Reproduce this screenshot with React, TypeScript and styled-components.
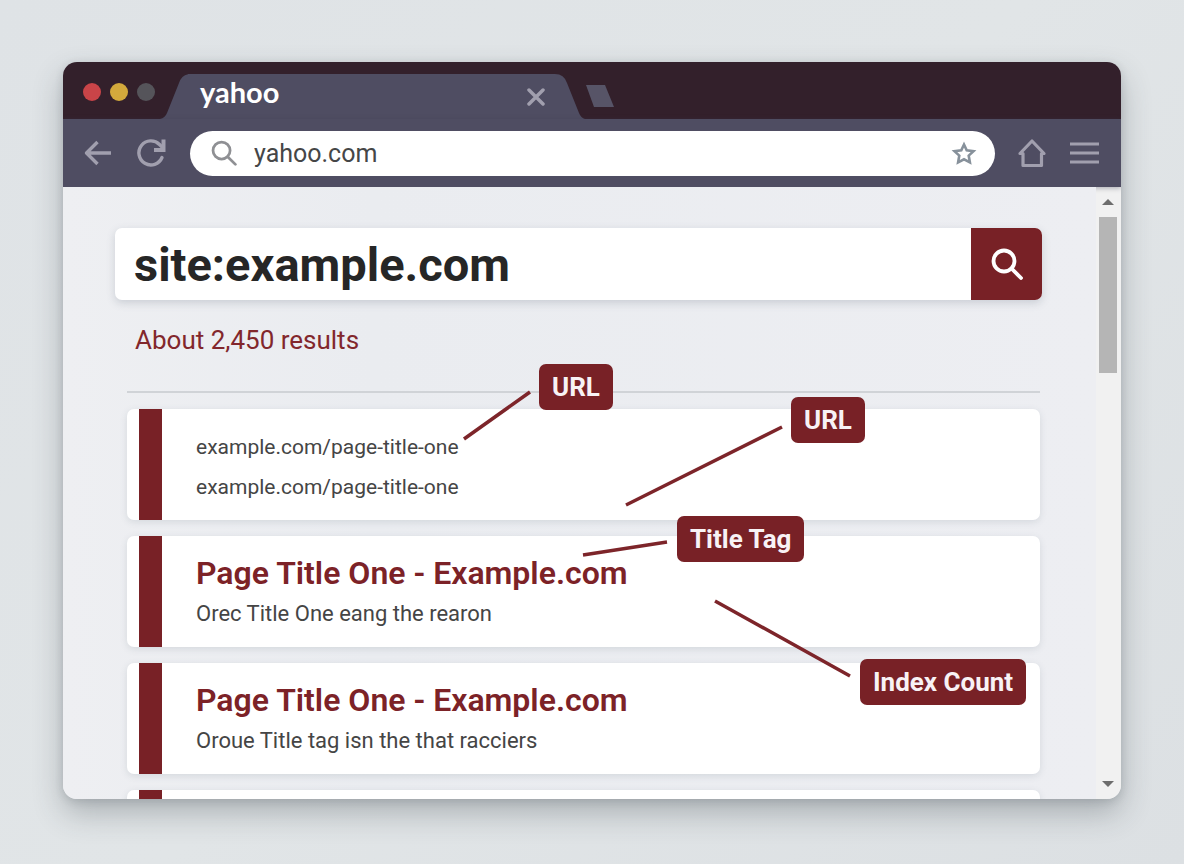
import React from 'react';
import styled, { createGlobalStyle } from 'styled-components';

const GlobalStyle = createGlobalStyle`
  * { box-sizing: border-box; }
  body {
    margin: 0;
    font-family: Roboto, "Liberation Sans", sans-serif;
    background: linear-gradient(135deg, #dfe3e6 0%, #e1e5e7 50%, #dce0e3 100%);
  }
  button { border: 0; padding: 0; background: none; cursor: pointer; }
  input { border: 0; padding: 0; background: none; outline: 0; font-family: inherit; min-width: 0; }
  svg { display: block; }
`;

const brand = '#782126';

const Stage = styled.main`
  display: flex;
  height: 100vh;
  padding: 62px 63px 65px;
`;

const BrowserWindow = styled.section`
  flex: 1;
  min-width: 0;
  display: flex;
  flex-direction: column;
  overflow: hidden;
  border-radius: 14px;
  background: #ebedf0;
  box-shadow: 0 14px 30px rgba(50, 60, 66, 0.3), 0 2px 8px rgba(50, 60, 66, 0.16);
`;

const TitleBar = styled.header`
  flex: none;
  display: flex;
  align-items: flex-end;
  height: 57px;
  padding-left: 20px;
  background: #33202b;
`;

const WindowDots = styled.div`
  display: flex;
  align-self: center;
  gap: 9px;
  width: 77px;
  padding-top: 3px;
`;

const Dot = styled.button<{ $color: string }>`
  width: 18px;
  height: 18px;
  border-radius: 50%;
  background: ${(p) => p.$color};
`;

const Tab = styled.div`
  display: flex;
  height: 45px;
  color: #4f4d62;
`;

const TabBody = styled.div`
  display: flex;
  align-items: center;
  justify-content: space-between;
  width: 367px;
  padding: 0 10px 0 12px;
  background: #4f4d62;
`;

const TabTitle = styled.span`
  padding-bottom: 9px;
  font-family: Lato, sans-serif;
  font-size: 29px;
  line-height: 32px;
  font-weight: 700;
  color: #fff;
`;

const IconButton = styled.button`
  flex: none;
  display: grid;
  place-items: center;
  color: #a19fae;
`;

const NewTab = styled.button`
  align-self: center;
  width: 28px;
  height: 22px;
  margin: 11px 0 0 1px;
`;

const Toolbar = styled.nav`
  flex: none;
  display: flex;
  align-items: center;
  height: 68px;
  padding: 0 22px 0 21px;
  gap: 22px;
  background: #4f4d62;
  position: relative;
  box-shadow: 0 1px 5px rgba(60, 60, 80, 0.4);
`;

const AddressBar = styled.label`
  flex: 1;
  display: flex;
  align-items: center;
  height: 45px;
  padding: 0 18px 0 21px;
  border-radius: 23px;
  background: #fff;
  color: #8f9094;
`;

const AddressInput = styled.input`
  flex: 1;
  margin-left: 17px;
  padding-top: 2px;
  font-size: 25px;
  line-height: 32px;
  color: #454647;
`;

const Viewport = styled.div`
  flex: 1;
  min-height: 0;
  display: flex;
`;

const Page = styled.div`
  position: relative;
  flex: 1;
  min-width: 0;
  padding: 41px 56px 0 52px;
  overflow: hidden;
  background: linear-gradient(90deg, #eeeff2, #eaecf0 30%, #edeef2);
`;

const SearchForm = styled.form`
  display: flex;
  height: 72px;
  margin-right: -2px;
  border-radius: 7px;
  overflow: hidden;
  background: #fff;
  box-shadow: 0 3px 8px rgba(90, 105, 120, 0.24);
`;

const SearchInput = styled.input`
  flex: 1;
  padding: 0 19px;
  font-size: 47px;
  font-weight: 700;
  color: #262626;
`;

const SearchButton = styled.button`
  display: grid;
  place-items: center;
  width: 71px;
  background: ${brand};
  color: #fff;
`;

const ResultCount = styled.p`
  margin: 24px 0 0;
  padding: 0 20px 34px;
  font-size: 26px;
  line-height: 33px;
  color: #82272c;
`;

const Results = styled.ul`
  display: grid;
  gap: 16px;
  margin: 0 0 0 12px;
  padding: 16px 0 0;
  list-style: none;
  border-top: 2px solid #d0d3d7;
`;

const Card = styled.li`
  display: flex;
  height: 111px;
  padding-left: 12px;
  border-radius: 7px;
  background: #fff;
  box-shadow: 0 2px 7px rgba(90, 105, 120, 0.16);
  &::before {
    content: '';
    width: 23px;
    background: ${brand};
  }
`;

const CardText = styled.div`
  padding: 18px 34px;
`;

const PlainLine = styled.p<{ $size: number }>`
  margin: 0;
  font-size: ${(p) => p.$size}px;
  line-height: 40px;
  color: #454545;
`;

const Title = styled.h2`
  margin: 0 0 2px;
  font-size: 32px;
  line-height: 38px;
  font-weight: 600;
`;

const Link = styled.a`
  color: inherit;
  text-decoration: none;
  ${Title} & { color: #7c2227; }
`;

const Callouts = styled.div`
  position: absolute;
  inset: 0;
  pointer-events: none;
`;

const Badge = styled.span<{ $x: number; $y: number }>`
  position: absolute;
  left: ${(p) => p.$x}px;
  top: ${(p) => p.$y}px;
  padding: 0 13px;
  border-radius: 7px;
  background: ${brand};
  color: #f8f2f5;
  font-size: 26px;
  line-height: 46px;
  font-weight: 700;
  white-space: nowrap;
`;

const ScrollBar = styled.div`
  flex: none;
  display: flex;
  flex-direction: column;
  align-items: center;
  width: 25px;
  padding-right: 1px;
  background: #f1f1f1;
`;

const ScrollTrack = styled.div`
  flex: 1;
`;

const ScrollThumb = styled.div`
  width: 18px;
  height: 156px;
  background: #b5b5b5;
`;

const ScrollButton = styled.button`
  display: grid;
  place-items: center;
  width: 24px;
  height: 30px;
  color: #6d6d6d;
`;

const results = [
  { lines: ['example.com/page-title-one', 'example.com/page-title-one'] },
  { title: 'Page Title One - Example.com', lines: ['Orec Title One eang the rearon'] },
  { title: 'Page Title One - Example.com', lines: ['Oroue Title tag isn the that racciers'] },
  { lines: [] },
];

const badges = [
  { text: 'URL', x: 476, y: 177 },
  { text: 'URL', x: 728, y: 210 },
  { text: 'Title Tag', x: 614, y: 329 },
  { text: 'Index Count', x: 797, y: 472 },
];

function Lens({ size, width }: { size: number; width: number }) {
  return (
    <svg width={size} height={size} viewBox="0 0 32 32" fill="none" stroke="currentColor" strokeWidth={width}>
      <circle cx="13" cy="13" r="10.5" />
      <path d="M20.5 20.5 30 30" strokeLinecap="round" />
    </svg>
  );
}

export default function App() {
  return (
    <Stage>
      <GlobalStyle />
      <BrowserWindow>
        <TitleBar>
          <WindowDots>
            <Dot $color="#c94448" aria-label="Close window" />
            <Dot $color="#d3a93c" aria-label="Minimise window" />
            <Dot $color="#55545a" aria-label="Zoom window" />
          </WindowDots>
          <Tab>
            <svg width="28" height="45" fill="currentColor" aria-hidden="true">
              <path d="M0 45Q5 44 7 39L19 9Q22 0 31 0V45Z" />
            </svg>
            <TabBody>
              <TabTitle>yahoo</TabTitle>
              <IconButton aria-label="Close tab">
                <svg width="18" height="18" fill="none" stroke="currentColor" strokeWidth="3.5" strokeLinecap="round">
                  <path d="M2 2 16 16M16 2 2 16" />
                </svg>
              </IconButton>
            </TabBody>
            <svg width="30" height="45" fill="currentColor" aria-hidden="true">
              <path d="M0 0Q9 0 12 9L24 39Q26 44 30 45H0Z" />
            </svg>
          </Tab>
          <NewTab aria-label="New tab">
            <svg width="28" height="22"><path d="M0 0H19L28 22H8Z" fill="#575467" /></svg>
          </NewTab>
        </TitleBar>
        <Toolbar>
          <IconButton aria-label="Back">
            <svg width="28" height="26" fill="none" stroke="currentColor" strokeWidth="3.4" strokeLinecap="butt" strokeLinejoin="round">
              <path d="M27 13H2M13.500 2 2.500 13 13.500 24" />
            </svg>
          </IconButton>
          <IconButton aria-label="Reload">
            <svg width="34" height="30" fill="none" stroke="currentColor" strokeWidth="3.4">
              <path d="M28 19.500A12 12 0 1 1 25.500 6.500L29 10" strokeLinecap="round" />
              <path d="M29.500 1.500V12H20" strokeWidth="4" />
            </svg>
          </IconButton>
          <AddressBar>
            <Lens size={26} width={3.4} />
            <AddressInput aria-label="Address" defaultValue="yahoo.com" />
            <IconButton aria-label="Bookmark">
              <svg width="26" height="26" fill="none" stroke="#87919b" strokeWidth="2.6" strokeLinejoin="miter">
                <path d="M13 4.500 15.700 10.300 22.500 11.200 17.700 15.600 18.900 22.300 13 19.300 7.100 22.300 8.300 15.600 3.500 11.200 10.300 10.300Z" />
              </svg>
            </IconButton>
          </AddressBar>
          <IconButton aria-label="Home">
            <svg width="30" height="30" fill="none" stroke="currentColor" strokeWidth="3.2" strokeLinejoin="round">
              <path d="M6 15.500H3L15 3 27 15.500H24.500V27.500H6Z" />
            </svg>
          </IconButton>
          <IconButton aria-label="Menu">
            <svg width="30" height="24" stroke="currentColor" strokeWidth="3.2">
              <path d="M1 3H30M1 12H30M1 21H30" />
            </svg>
          </IconButton>
        </Toolbar>
        <Viewport>
          <Page>
            <SearchForm onSubmit={(e) => e.preventDefault()}>
              <SearchInput aria-label="Search" defaultValue="site:example.com" />
              <SearchButton aria-label="Run search">
                <Lens size={32} width={3.8} />
              </SearchButton>
            </SearchForm>
            <ResultCount>About 2,450 results</ResultCount>
            <Results>
              {results.map((r, i) => (
                <Card key={i}>
                  <CardText>
                    {r.title && <Title><Link href="#result">{r.title}</Link></Title>}
                    {r.lines.map((line, j) => (
                      <PlainLine key={j} $size={r.title ? 22 : 21}>
                        {r.title ? line : <Link href="#result">{line}</Link>}
                      </PlainLine>
                    ))}
                  </CardText>
                </Card>
              ))}
            </Results>
            <Callouts>
              <svg width="100%" height="100%" stroke="#7d252a" strokeWidth="3.500" aria-hidden="true">
                <path d="M401 252 467 205M563 318 719 240M520 368 604 355M652 414 787 489" fill="none" />
              </svg>
              {badges.map((b) => (
                <Badge key={b.text + b.x} $x={b.x} $y={b.y}>{b.text}</Badge>
              ))}
            </Callouts>
          </Page>
          <ScrollBar>
            <ScrollButton aria-label="Scroll up">
              <svg width="12" height="6" fill="currentColor"><path d="M0 6 6 0 12 6Z" /></svg>
            </ScrollButton>
            <ScrollTrack>
              <ScrollThumb />
            </ScrollTrack>
            <ScrollButton aria-label="Scroll down">
              <svg width="12" height="6" fill="currentColor"><path d="M0 0 6 6 12 0Z" /></svg>
            </ScrollButton>
          </ScrollBar>
        </Viewport>
      </BrowserWindow>
    </Stage>
  );
}
